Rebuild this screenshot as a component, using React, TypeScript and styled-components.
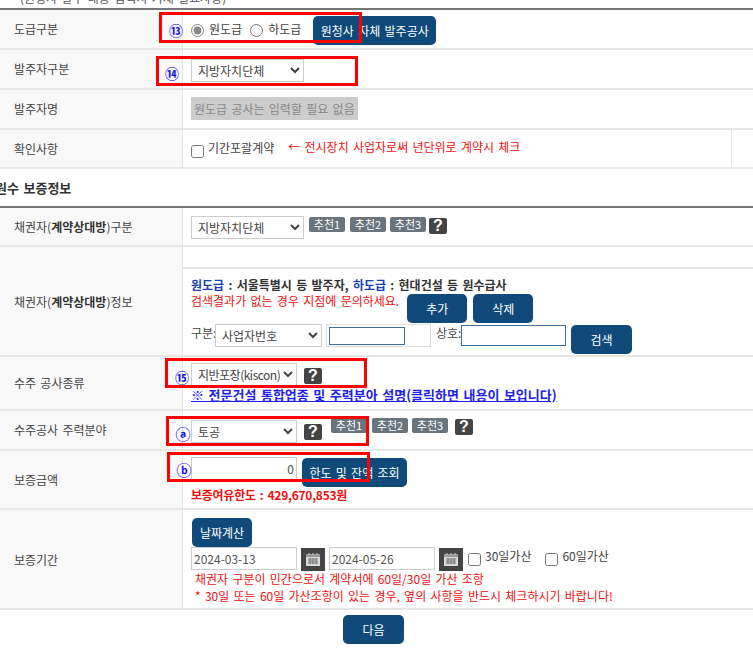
import React from "react";
import styled, { createGlobalStyle } from "styled-components";

const GlobalStyle = createGlobalStyle`
  html, body { margin: 0; padding: 0; background: #fff; }
  body {
    font-family: "Noto Sans CJK KR", "Noto Sans", sans-serif;
    font-size: 12px;
    color: #444;
    word-spacing: 1.6px;
  }
  select, input, button { font-family: inherit; word-spacing: inherit; box-sizing: border-box; }
`;

const Page = styled.div`
  position: relative;
  width: 753px;
  height: 653px;
  overflow: hidden;
`;

const TopNote = styled.div`
  height: 17px;
  margin-top: -9px;
  padding-left: 20px;
  line-height: 13px;
  color: #555;
`;

const Section = styled.div`
  border-top: 2px solid #777;
`;

const Row = styled.div<{ $h: number }>`
  display: grid;
  grid-template-columns: 183px 1fr;
  height: ${(p) => p.$h}px;
  box-sizing: border-box;
  border-bottom: 2px solid #e6e6e6;
`;

const Label = styled.div<{ $up?: boolean }>`
  display: flex;
  align-items: center;
  padding: 0 0 ${(p) => (p.$up ? 2 : 0)}px 14px;
  background: #f8f8f8;
  border-right: 1px solid #e4e4e4;
`;

const StrongWord = styled.b`
  color: #333;
`;

const Cell = styled.div<{ $pt?: number }>`
  display: flex;
  align-items: flex-start;
  padding: ${(p) => p.$pt ?? 0}px 0 0 8px;
  box-sizing: border-box;
  min-width: 0;
`;

const ConfirmCell = styled(Cell)`
  position: relative;
  &::after {
    content: "";
    position: absolute;
    top: 0;
    bottom: 0;
    left: 548px;
    border-left: 1px solid #e6e6e6;
  }
`;

const StackCell = styled.div`
  display: flex;
  flex-direction: column;
  min-width: 0;
`;

const BlankStrip = styled.div`
  height: 20px;
  flex: none;
  border-bottom: 2px solid #e6e6e6;
`;

const SectionTitle = styled.div`
  height: 37px;
  margin-left: -5px;
  display: flex;
  align-items: center;
  font-size: 13px;
  font-weight: 700;
  color: #333;
`;

const Radio = styled.input.attrs({ type: "radio" })`
  width: 13px;
  height: 13px;
  margin: 0 5px 0 0;
  accent-color: #888;
`;

const Check = styled.input.attrs({ type: "checkbox" })<{ $ml?: number; $mt?: number }>`
  width: 13px;
  height: 13px;
  margin: ${(p) => p.$mt ?? 0}px 4px 0 ${(p) => p.$ml ?? 0}px;
  flex: none;
`;

const OptionText = styled.span<{ $mr?: number }>`
  margin-right: ${(p) => p.$mr ?? 0}px;
  transform: translateY(-2px);
  white-space: nowrap;
`;

const Line = styled.div<{ $mt?: number; $ml?: number }>`
  display: flex;
  align-items: flex-start;
  flex: none;
  margin-top: ${(p) => p.$mt ?? 0}px;
  margin-left: ${(p) => p.$ml ?? 0}px;
  white-space: nowrap;
`;

const CenterLine = styled(Line)`
  align-items: center;
`;

const Select = styled.select<{ $w: number; $tight?: boolean }>`
  width: ${(p) => p.$w}px;
  height: 23px;
  flex: none;
  border: 1px solid #ccc;
  border-radius: 0;
  background: #fff;
  color: #444;
  font-size: 12px;
  letter-spacing: ${(p) => (p.$tight ? "-0.5px" : "0")};
  padding: 0 0 0 2px;
`;

const TextInput = styled.input<{ $w: number; $h?: number; $ml?: number; $right?: boolean; $mt?: number }>`
  width: ${(p) => p.$w}px;
  height: ${(p) => p.$h ?? 23}px;
  flex: none;
  margin: ${(p) => p.$mt ?? 0}px 0 0 ${(p) => p.$ml ?? 0}px;
  border: 1px solid #ccc;
  background: #fff;
  color: #555;
  font-size: 12px;
  padding: 0 2px;
  text-align: ${(p) => (p.$right ? "right" : "left")};
  &:disabled {
    background: #ccc;
    color: #888;
  }
`;

const BlueInput = styled(TextInput)`
  border: 1px solid #3f6f9f;
`;

const InputFrame = styled.div`
  width: 105px;
  height: 23px;
  flex: none;
  box-sizing: border-box;
  margin-left: 4px;
  padding: 2px 0 0 2px;
  border: 1px solid #ddd;
`;

const NavyButton = styled.button<{ $w: number; $ml?: number; $mt?: number }>`
  width: ${(p) => p.$w}px;
  height: 29px;
  flex: none;
  margin: ${(p) => p.$mt ?? 0}px 0 0 ${(p) => p.$ml ?? 0}px;
  padding: 0;
  border: 0;
  border-radius: 5px;
  background: #0f4a7b;
  color: #fff;
  font-size: 12px;
  white-space: nowrap;
`;

const Badge = styled.span<{ $ml: number; $mt?: number }>`
  width: 36px;
  height: 15px;
  flex: none;
  margin: ${(p) => p.$mt ?? 0}px 0 0 ${(p) => p.$ml}px;
  border-radius: 2px;
  background: #69747c;
  color: #fff;
  font-size: 11px;
  line-height: 14px;
  text-align: center;
`;

const Help = styled.span<{ $ml: number; $mt?: number }>`
  width: 18px;
  height: 16px;
  flex: none;
  margin: ${(p) => p.$mt ?? 0}px 0 0 ${(p) => p.$ml}px;
  border-radius: 2px;
  background: #444;
  color: #fff;
  font: 700 16px/16px "Liberation Sans", sans-serif;
  text-align: center;
`;

const RedText = styled.div<{ $ml?: number; $mt?: number; $bold?: boolean }>`
  margin: ${(p) => p.$mt ?? 0}px 0 0 ${(p) => p.$ml ?? 0}px;
  color: #f01010;
  font-size: 12px;
  line-height: 16px;
  font-weight: ${(p) => (p.$bold ? 700 : 400)};
  letter-spacing: ${(p) => (p.$bold ? "-0.25px" : "0")};
  white-space: nowrap;
`;

const Notice = styled.div`
  margin: 8px 0 0 8px;
  color: #333;
  font-size: 12px;
  line-height: 16px;
  font-weight: 700;
  white-space: nowrap;
`;

const BlueWord = styled.span`
  color: #1a3fb0;
`;

const HelpLink = styled.a`
  display: block;
  margin-top: 1px;
  color: #2222ee;
  font-size: 13px;
  line-height: 16px;
  font-weight: 700;
  text-decoration: underline;
  white-space: nowrap;
`;

const FieldHint = styled.span<{ $ml?: number; $w?: number; $mt?: number }>`
  margin: ${(p) => p.$mt ?? 0}px 0 0 ${(p) => p.$ml ?? 0}px;
  width: ${(p) => (p.$w ? `${p.$w}px` : "auto")};
  flex: none;
  white-space: nowrap;
`;

const CalendarButton = styled.span<{ $ml: number }>`
  display: flex;
  align-items: center;
  justify-content: center;
  width: 24px;
  height: 23px;
  flex: none;
  margin: 1px 0 0 ${(p) => p.$ml}px;
  background: #444;
`;

const Footer = styled.div`
  display: flex;
  justify-content: center;
  padding: 5px 6px 0 0;
`;

const RedBox = styled.div<{ $x: number; $y: number; $w: number; $h: number }>`
  position: absolute;
  left: ${(p) => p.$x}px;
  top: ${(p) => p.$y}px;
  width: ${(p) => p.$w}px;
  height: ${(p) => p.$h}px;
  box-sizing: border-box;
  border: 3px solid #f00;
`;

const Marker = styled.span<{ $x: number; $y: number; $size: number }>`
  position: absolute;
  left: ${(p) => p.$x - 10}px;
  top: ${(p) => p.$y - 10}px;
  width: 20px;
  line-height: 20px;
  text-align: center;
  color: #1414e6;
  font-size: ${(p) => p.$size}px;
  font-weight: 700;
`;

const CalendarIcon = () => (
  <svg width="16" height="15" viewBox="0 0 16 15" fill="none">
    <rect x="1" y="2" width="14" height="12" fill="#d8d8d8" />
    <rect x="1" y="2" width="14" height="3" fill="#999" />
    <path d="M4 1v2M8 1v2M12 1v2" stroke="#ccc" strokeWidth="1" />
    <path d="M3 7h10M3 9h10M3 11h10M5 6.5v5.5M8 6.5v5.5M11 6.5v5.5" stroke="#666" strokeWidth="0.8" />
  </svg>
);

const annotations = [
  { x: 159, y: 12, w: 203, h: 31 },
  { x: 156, y: 56, w: 202, h: 30 },
  { x: 165, y: 358, w: 202, h: 30 },
  { x: 166, y: 416, w: 203, h: 30 },
  { x: 167, y: 452, w: 203, h: 30 },
];

const markers = [
  { x: 176, y: 30, t: "⑬", s: 14 },
  { x: 172, y: 73, t: "⑭", s: 14 },
  { x: 182, y: 377, t: "⑮", s: 14 },
  { x: 183, y: 434, t: "ⓐ", s: 15 },
  { x: 184, y: 470, t: "ⓑ", s: 15 },
];

const App = () => (
  <Page>
    <GlobalStyle />
    <TopNote>(원청사 발주 내용 입력시 기재 필요사항)</TopNote>
    <Section>
      <Row $h={40}>
        <Label $up>도급구분</Label>
        <Cell $pt={6}>
          <CenterLine $mt={6}>
            <Radio name="contract" defaultChecked />
            <OptionText $mr={8}>원도급</OptionText>
            <Radio name="contract" />
            <OptionText>하도급</OptionText>
          </CenterLine>
          <NavyButton $w={123} $ml={12}>원청사 자체 발주공사</NavyButton>
        </Cell>
      </Row>
      <Row $h={40}>
        <Label $up>발주자구분</Label>
        <Cell $pt={9}>
          <Select $w={113} defaultValue="지방자치단체">
            <option>지방자치단체</option>
          </Select>
        </Cell>
      </Row>
      <Row $h={40}>
        <Label $up>발주자명</Label>
        <Cell $pt={7}>
          <TextInput $w={167} disabled value="원도급 공사는 입력할 필요 없음" readOnly />
        </Cell>
      </Row>
      <Row $h={39}>
        <Label>확인사항</Label>
        <ConfirmCell $pt={15}>
          <Check />
          <FieldHint $mt={-6}>기간포괄계약</FieldHint>
          <RedText $ml={14} $mt={-6}>← 전시장치 사업자로써 년단위로 계약시 체크</RedText>
        </ConfirmCell>
      </Row>
    </Section>
    <SectionTitle>원수 보증정보</SectionTitle>
    <Section>
      <Row $h={39}>
        <Label>
          <span>채권자(<StrongWord>계약상대방</StrongWord>)구분</span>
        </Label>
        <Cell $pt={8}>
          <Select $w={113} defaultValue="지방자치단체">
            <option>지방자치단체</option>
          </Select>
          <Badge $ml={5} $mt={1}>추천1</Badge>
          <Badge $ml={5} $mt={1}>추천2</Badge>
          <Badge $ml={4} $mt={1}>추천3</Badge>
          <Help $ml={3} $mt={2}>?</Help>
        </Cell>
      </Row>
      <Row $h={110}>
        <Label>
          <span>채권자(<StrongWord>계약상대방</StrongWord>)정보</span>
        </Label>
        <StackCell>
          <BlankStrip />
          <Notice>
            <BlueWord>원도급</BlueWord> : 서울특별시 등 발주자, <BlueWord>하도급</BlueWord> : 현대건설 등 원수급사
          </Notice>
          <Line $ml={8}>
            <RedText>검색결과가 없는 경우 지점에 문의하세요.</RedText>
            <NavyButton $w={60} $ml={8} $mt={1}>추가</NavyButton>
            <NavyButton $w={60} $ml={6} $mt={1}>삭제</NavyButton>
          </Line>
          <Line $ml={8} $mt={1}>
            <FieldHint $w={24}>구분:</FieldHint>
            <Select $w={107} defaultValue="사업자번호">
              <option>사업자번호</option>
            </Select>
            <InputFrame>
              <BlueInput $w={76} $h={18} />
            </InputFrame>
            <FieldHint $ml={5} $w={25}>상호:</FieldHint>
            <BlueInput $w={105} $h={21} $mt={1} />
            <NavyButton $w={61} $ml={5} $mt={1}>검색</NavyButton>
          </Line>
        </StackCell>
      </Row>
      <Row $h={54}>
        <Label $up>수주 공사종류</Label>
        <StackCell>
          <Line $ml={8} $mt={6}>
            <Select $w={106} $tight defaultValue="지반포장(kiscon)">
              <option>지반포장(kiscon)</option>
            </Select>
            <Help $ml={7} $mt={5}>?</Help>
          </Line>
          <Line $ml={8}>
            <HelpLink>※ 전문건설 통합업종 및 주력분아 설명(클릭하면 내용이 보입니다)</HelpLink>
          </Line>
        </StackCell>
      </Row>
      <Row $h={40}>
        <Label $up>수주공사 주력분야</Label>
        <Cell $pt={9}>
          <Select $w={106} defaultValue="토공">
            <option>토공</option>
          </Select>
          <Help $ml={7} $mt={4}>?</Help>
          <Badge $ml={9} $mt={-2}>추천1</Badge>
          <Badge $ml={5} $mt={-2}>추천2</Badge>
          <Badge $ml={4} $mt={-2}>추천3</Badge>
          <Help $ml={7} $mt={-1}>?</Help>
        </Cell>
      </Row>
      <Row $h={59}>
        <Label>보증금액</Label>
        <StackCell>
          <Line $ml={8} $mt={6}>
            <TextInput $w={106} $right defaultValue="0" />
            <NavyButton $w={105} $ml={5} $mt={1}>한도 및 잔액 조회</NavyButton>
          </Line>
          <RedText $ml={8} $bold>보증여유한도 : 429,670,853원</RedText>
        </StackCell>
      </Row>
      <Row $h={100}>
        <Label>보증기간</Label>
        <StackCell>
          <Line $ml={9} $mt={8}>
            <NavyButton $w={60}>날짜계산</NavyButton>
          </Line>
          <Line $ml={8}>
            <TextInput $w={106} defaultValue="2024-03-13" />
            <CalendarButton $ml={4}><CalendarIcon /></CalendarButton>
            <TextInput $w={106} $ml={4} defaultValue="2024-05-26" />
            <CalendarButton $ml={4}><CalendarIcon /></CalendarButton>
            <Check $ml={5} $mt={6} />
            <FieldHint>30일가산</FieldHint>
            <Check $ml={14} $mt={6} />
            <FieldHint>60일가산</FieldHint>
          </Line>
          <RedText $ml={12}>채권자 구분이 민간으로서 계약서에 60일/30일 가산 조항</RedText>
          <RedText $ml={12} $mt={1}>* 30일 또는 60일 가산조항이 있는 경우, 옆의 사항을 반드시 체크하시기 바랍니다!</RedText>
        </StackCell>
      </Row>
    </Section>
    <Footer>
      <NavyButton $w={61}>다음</NavyButton>
    </Footer>
    {annotations.map((a) => (
      <RedBox key={a.y} $x={a.x} $y={a.y} $w={a.w} $h={a.h} />
    ))}
    {markers.map((m) => (
      <Marker key={m.t} $x={m.x} $y={m.y} $size={m.s}>{m.t}</Marker>
    ))}
  </Page>
);

export default App;
